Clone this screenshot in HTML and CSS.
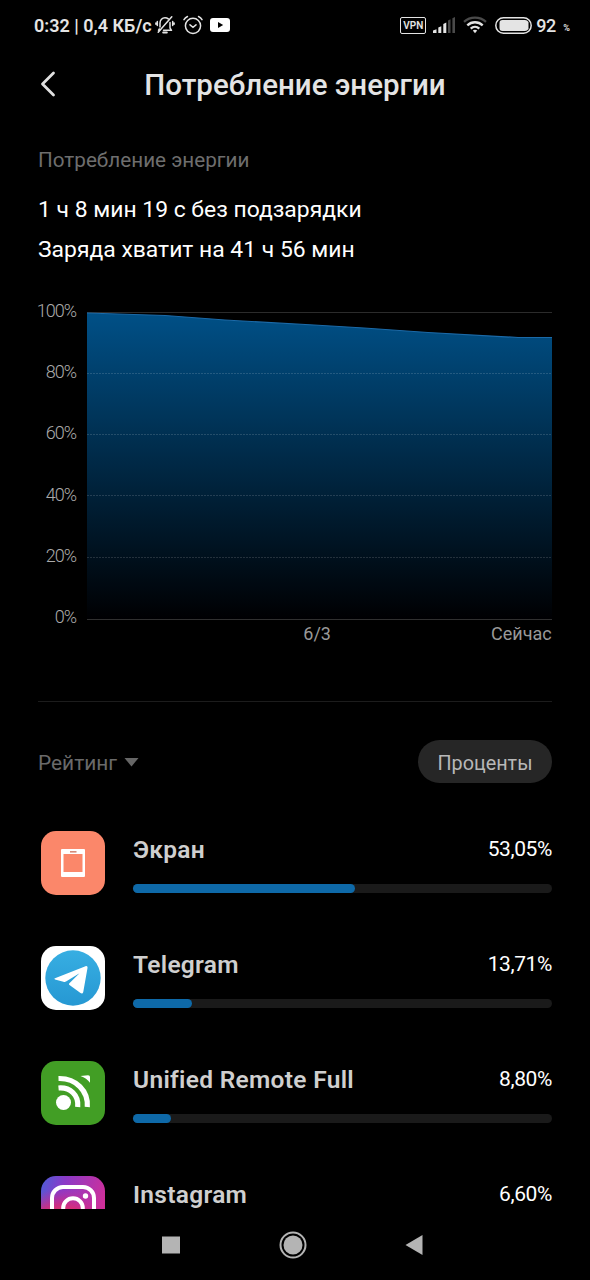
FILE: index.html
```html
<!DOCTYPE html>
<html lang="ru">
<head>
    <meta charset="UTF-8">
    <meta name="viewport" content="width=device-width, initial-scale=1.0">
    <title>Потребление энергии</title>
    <link rel="stylesheet" href="styles.css">
</head>
<body>
    <div class="status-bar">
        <div class="status-left">
            <span class="status-text">0:32 | 0,4 КБ/с</span>
            <svg class="icon-mute" width="20" height="20" viewBox="0 0 20 20" fill="none" stroke="#e4e4e4" stroke-width="1.5" stroke-linecap="round" stroke-linejoin="round">
                <path d="M5 12V8.200C5 5 7.200 2.800 10 2.800c1.300 0 2.400.4 3.300 1.100M15 7.500v5.500l1.500 2.300H8.500M4.500 15.300H3.500L4.300 14"/>
                <path d="M8.200 17.500h3.600" stroke-width="2"/>
                <path d="M16.800 1.800L3.200 17.300"/>
                <path d="M2.300 6.500v4M17.700 6.500v4M.9 8v1.200M19.100 8v1.200"/>
            </svg>
            <svg class="icon-alarm" width="20" height="20" viewBox="0 0 20 20" fill="none" stroke="#e4e4e4" stroke-width="1.5" stroke-linecap="round">
                <circle cx="10" cy="10.800" r="7.600"/>
                <path d="M7 9.800l3 2.500 3-2.500M1 4.600C1.800 3.200 3 2.200 4.500 1.500M19 4.600C18.200 3.200 17 2.200 15.500 1.500"/>
            </svg>
            <svg class="icon-youtube" width="20" height="14" viewBox="0 0 20 14">
                <rect width="20" height="14" rx="3" fill="#fff"/>
                <path d="M8 4l5.200 3L8 10z" fill="#000"/>
            </svg>
        </div>
        <div class="status-right">
            <span class="vpn">VPN</span>
            <svg class="icon-signal" width="22" height="16" viewBox="0 0 22 16" fill="#e4e4e4">
                <path d="M0 13.500L3.500 12.200V16H0zM5.300 10.500L8.300 9.300V16h-3zM10.300 7L13.300 5.500V16h-3z"/>
                <path d="M15 3.600L17.500 2.300V16H15zM19.400 1.200L22 0v16h-2.600z" fill="#4a4a4a"/>
            </svg>
            <svg class="icon-wifi" width="24" height="18" viewBox="0 0 24 18" fill="none" stroke="#e4e4e4" stroke-width="2.3">
                <path d="M1 5.800C7.300.2 16.700.2 23 5.800" stroke="#4a4a4a"/>
                <path d="M4.300 9.400c4.400-4.200 11-4.200 15.400 0M7.700 12.600c2.500-2.300 6.100-2.300 8.600 0"/>
                <path d="M9.800 14.600c1.300-1 3.100-1 4.400 0L12 17.300z" fill="#e4e4e4" stroke="none"/>
            </svg>
            <svg class="icon-battery" width="37" height="17" viewBox="0 0 37 17">
                <rect x=".8" y=".8" width="35.400" height="15.400" rx="7.700" fill="none" stroke="#e4e4e4" stroke-width="1.5"/>
                <path d="M7.500 3h22.500a5 5 0 0 1 3.500 2v7a5 5 0 0 1-3.500 2H7.500a3 3 0 0 1-3-3V6a3 3 0 0 1 3-3z" fill="#e4e4e4"/>
            </svg>
            <span class="battery-level">92</span>
            <span class="battery-percent">%</span>
        </div>
    </div>

    <header class="header">
        <svg class="back" width="16" height="28" viewBox="0 0 16 28" fill="none" stroke="#e0e0e0" stroke-width="2.8" stroke-linecap="round" stroke-linejoin="round">
            <path d="M13.500 2L2.500 13l11 11"/>
        </svg>
        <h1 class="title">Потребление энергии</h1>
    </header>

    <main class="content">
        <h2 class="section-label">Потребление энергии</h2>
        <p class="summary">1 ч 8 мин 19 с без подзарядки</p>
        <p class="summary">Заряда хватит на 41 ч 56 мин</p>

        <div class="chart">
            <div class="y-axis">
                <span>100%</span>
                <span>80%</span>
                <span>60%</span>
                <span>40%</span>
                <span>20%</span>
                <span>0%</span>
            </div>
            <div class="plot">
                <svg width="465" height="308" viewBox="0 0 465 308">
                    <defs>
                        <linearGradient id="charge" x1="0" y1="0" x2="0" y2="1">
                            <stop offset="0" stop-color="#005087"/>
                            <stop offset="1" stop-color="#000002"/>
                        </linearGradient>
                    </defs>
                    <path d="M0 .5H465" stroke="#2b2b2b"/>
                    <path d="M0 1L78 3.500L138 8L227 13L277 16L341 20.500L431 25.500H465V307H0z" fill="url(#charge)"/>
                    <path d="M0 1L78 3.500L138 8L227 13L277 16L341 20.500L431 25.500H465" fill="none" stroke="#1b6aa8" stroke-width="1.2"/>
                    <path d="M0 61.500H465M0 122.500H465M0 183.500H465M0 245.500H465" stroke="#fff" stroke-opacity=".14" stroke-dasharray="2 1"/>
                    <path d="M0 307.500H465" stroke="#303030"/>
                </svg>
                <div class="x-axis">
                    <span class="x-date">6/3</span>
                    <span class="x-now">Сейчас</span>
                </div>
            </div>
        </div>

        <div class="filter">
            <div class="sort">
                Рейтинг
                <svg width="15" height="9" viewBox="0 0 15 9"><path d="M.5 0h14L7.500 8.500z" fill="#666"/></svg>
            </div>
            <div class="mode">Проценты</div>
        </div>

        <div class="apps">
            <div class="app">
                <svg class="app-icon" viewBox="0 0 64 64">
                    <rect width="64" height="64" rx="15" fill="#fb876a"/>
                    <path d="M21 18h22a1 1 0 0 1 1 1v26a1 1 0 0 1-1 1H21a1 1 0 0 1-1-1V19a1 1 0 0 1 1-1zM22.500 23v18h19V23z" fill="#fff" fill-rule="evenodd"/>
                    <rect x="29" y="20" width="6.500" height="1.600" fill="#d58a78"/>
                </svg>
                <div class="app-info">
                    <div class="app-row"><span class="app-name">Экран</span><span class="app-value">53,05%</span></div>
                    <div class="bar"><div class="fill" style="width: 53.05%"></div></div>
                </div>
            </div>
            <div class="app">
                <svg class="app-icon" viewBox="0 0 64 64">
                    <defs>
                        <linearGradient id="tg" x1="0" y1="0" x2="0" y2="1">
                            <stop offset="0" stop-color="#37aee2"/>
                            <stop offset="1" stop-color="#2698d3"/>
                        </linearGradient>
                    </defs>
                    <rect width="64" height="64" rx="15" fill="#fff"/>
                    <circle cx="32" cy="32" r="27.700" fill="url(#tg)"/>
                    <path d="M14 32.300L44.500 20.200c1.400-.5 2.300.3 2 1.900L42.300 45.700c-.3 1.700-1.400 2.200-2.800 1.300L28.500 38.900c-.7-.6-.7-1.100-.1-1.700L38.500 27.300 25 35.500c-.8.500-1.700.5-2.600.2L14 33.400c-.8-.3-.8-.8 0-1.100z" fill="#fff"/>
                </svg>
                <div class="app-info">
                    <div class="app-row"><span class="app-name">Telegram</span><span class="app-value">13,71%</span></div>
                    <div class="bar"><div class="fill" style="width: 14%"></div></div>
                </div>
            </div>
            <div class="app">
                <svg class="app-icon" viewBox="0 0 64 64">
                    <rect width="64" height="64" rx="15" fill="#429e25"/>
                    <circle cx="22.500" cy="41.500" r="7.500" fill="#fff"/>
                    <path d="M17.500 27C29 26 38 34 36.700 46M17.500 17.500C35 17 47.500 30 46.300 46" fill="none" stroke="#fff" stroke-width="5.2"/>
                    <path d="M39.500 15l7.500-.8c1.300 0 2 .8 2 2v5.600c-2-3-5.500-5.600-9.500-6.800z" fill="#fff"/>
                </svg>
                <div class="app-info">
                    <div class="app-row"><span class="app-name">Unified Remote Full</span><span class="app-value">8,80%</span></div>
                    <div class="bar"><div class="fill" style="width: 9%"></div></div>
                </div>
            </div>
            <div class="app">
                <svg class="app-icon" viewBox="0 0 64 64">
                    <defs>
                        <linearGradient id="ig" x1="0" y1="0" x2="1" y2=".35">
                            <stop offset="0" stop-color="#4a5fd8"/>
                            <stop offset=".35" stop-color="#8a3ac8"/>
                            <stop offset="1" stop-color="#cf2f9a"/>
                        </linearGradient>
                        <radialGradient id="ig-warm" cx=".3" cy="1.050" r=".85">
                            <stop offset="0" stop-color="#fdd45c"/>
                            <stop offset=".4" stop-color="#f8563f"/>
                            <stop offset=".7" stop-color="#e02a6e" stop-opacity=".75"/>
                            <stop offset="1" stop-color="#d02a90" stop-opacity="0"/>
                        </radialGradient>
                    </defs>
                    <rect width="64" height="64" rx="15" fill="url(#ig)"/>
                    <rect width="64" height="64" rx="15" fill="url(#ig-warm)"/>
                    <rect x="11" y="11" width="42" height="42" rx="11" fill="none" stroke="#fff" stroke-width="4"/>
                    <circle cx="32" cy="32" r="9.800" fill="none" stroke="#fff" stroke-width="4"/>
                    <circle cx="44.500" cy="20" r="2.700" fill="#fff"/>
                </svg>
                <div class="app-info">
                    <div class="app-row"><span class="app-name">Instagram</span><span class="app-value">6,60%</span></div>
                    <div class="bar"><div class="fill" style="width: 6.6%"></div></div>
                </div>
            </div>
        </div>
    </main>

    <nav class="nav-bar">
        <svg width="18" height="18" viewBox="0 0 18 18"><rect y=".5" width="18" height="17" fill="#b4b4b4"/></svg>
        <svg width="28" height="28" viewBox="0 0 28 28">
            <circle cx="14" cy="14" r="12.500" fill="none" stroke="#b4b4b4" stroke-width="2"/>
            <circle cx="14" cy="14" r="9.500" fill="#b4b4b4"/>
        </svg>
        <svg width="18" height="20" viewBox="0 0 18 20"><path d="M.5 10L17.500 0v20z" fill="#b4b4b4"/></svg>
    </nav>
</body>
</html>
```
FILE: styles.css
```css
* {
    margin: 0;
    padding: 0;
    box-sizing: border-box;
}

body {
    font-family: Roboto, sans-serif;
    background: #000;
    color: #fff;
    width: 590px;
    height: 1280px;
    overflow: hidden;
    display: flex;
    flex-direction: column;
}

svg {
    display: block;
    flex-shrink: 0;
}

.status-bar {
    height: 50px;
    padding: 0 20px 0 34px;
    display: flex;
    justify-content: space-between;
    align-items: center;
    color: #e4e4e4;
}

.status-left,
.status-right {
    display: flex;
    align-items: center;
}

.status-text {
    font-size: 18px;
    font-weight: 600;
    width: 117px;
    white-space: nowrap;
}

.icon-mute {
    margin-left: 4px;
}

.icon-alarm {
    margin-left: 8px;
}

.icon-youtube {
    margin-left: 7px;
}

.vpn {
    width: 26px;
    height: 17px;
    border: 1.5px solid #e4e4e4;
    border-radius: 2px;
    font-size: 10px;
    font-weight: 600;
    line-height: 15px;
    text-align: center;
}

.icon-signal {
    margin-left: 7px;
}

.icon-wifi {
    margin-left: 8px;
}

.icon-battery {
    margin-left: 8px;
}

.battery-level {
    font-size: 18px;
    font-weight: 500;
    letter-spacing: -0.6px;
    margin-left: 4px;
    width: 20px;
}

.battery-percent {
    font-size: 9px;
    font-weight: 600;
    margin-left: 7px;
    padding-top: 5px;
}

.header {
    height: 70px;
    padding: 0 40px;
    display: flex;
    align-items: center;
}

.title {
    flex: 1;
    padding-right: 16px;
    text-align: center;
    font-size: 29.5px;
    font-weight: 500;
    color: #e4e4e4;
    white-space: nowrap;
}

.content {
    flex: 1;
    min-height: 0;
    overflow: hidden;
    padding: 27px 38px 0;
}

.section-label {
    font-size: 20.7px;
    font-weight: 400;
    line-height: 26px;
    color: #6e6e6e;
    margin-bottom: 17px;
}

.summary {
    font-size: 22.9px;
    line-height: 40px;
}

.chart {
    display: flex;
    margin-top: 31px;
    height: 401px;
    border-bottom: 1px solid #1c1c1c;
}

.y-axis {
    width: 38px;
    margin-right: 11px;
    height: 326px;
    display: flex;
    flex-direction: column;
    justify-content: space-between;
    align-items: flex-end;
    font-size: 18px;
    font-weight: 350;
    letter-spacing: -1px;
    line-height: 20px;
    color: #aaa;
}

.plot {
    width: 465px;
    padding-top: 11px;
}

.x-axis {
    display: flex;
    justify-content: flex-end;
    padding-top: 4px;
    font-size: 18px;
    line-height: 20px;
    color: #999;
}

.x-now {
    width: 61px;
    margin-left: 160px;
}

.filter {
    display: flex;
    justify-content: space-between;
    align-items: center;
    height: 43px;
    margin-top: 38px;
}

.sort {
    display: flex;
    align-items: center;
    gap: 7px;
    padding-top: 2px;
    font-size: 20.9px;
    color: #6a6a6a;
}

.sort svg {
    margin-top: -1px;
}

.mode {
    width: 134px;
    height: 43px;
    border-radius: 22px;
    background: #262626;
    color: #b8b8b8;
    font-size: 19.8px;
    line-height: 47px;
    text-align: center;
}

.apps {
    margin-top: 48px;
}

.app {
    display: flex;
    height: 115px;
    padding-left: 3px;
}

.app-icon {
    width: 64px;
    height: 64px;
    margin-right: 28px;
}

.app-info {
    flex: 1;
    padding-top: 3px;
}

.app-row {
    display: flex;
    justify-content: space-between;
    height: 50px;
}

.app-name {
    font-size: 24.5px;
    font-weight: 600;
    letter-spacing: 0.3px;
    line-height: 28px;
    padding-top: 2px;
    color: #cfcfcf;
}

.app-value {
    font-size: 21px;
    letter-spacing: -0.4px;
    line-height: 30px;
}

.bar {
    height: 9px;
    border-radius: 5px;
    background: #1a1a1a;
}

.fill {
    height: 9px;
    border-radius: 5px;
    background: #0e69a8;
}

.nav-bar {
    height: 71px;
    display: flex;
    align-items: center;
    padding-left: 162px;
    gap: 99px;
}

.nav-bar svg:last-child {
    margin-left: -1px;
}
```
